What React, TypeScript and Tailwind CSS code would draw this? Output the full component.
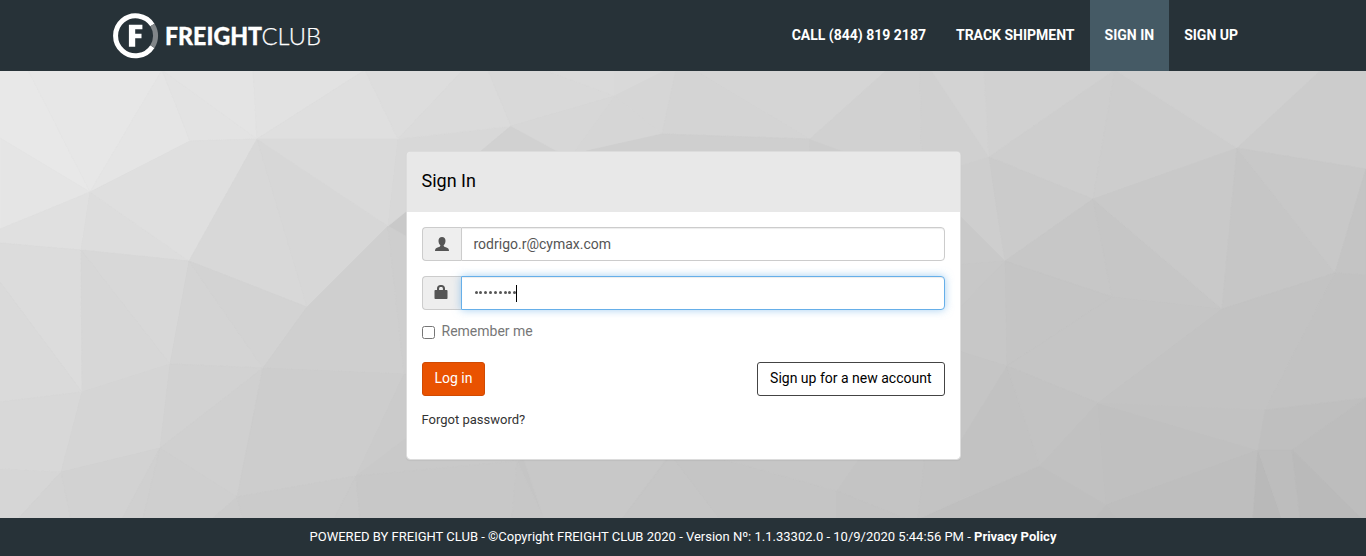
import { useState } from "react";

// Facets of the low-poly backdrop: [fill, points] in page pixels.
const facets: [string, string][] = [
  // left side
  ["#e8e8e8", "0,70 28,70 90,192 0,138"],
  ["#e7e7e7", "28,70 162,70 90,192"],
  ["#e5e5e5", "162,70 190,141 90,192"],
  ["#e3e3e3", "162,70 190,141 257,139"],
  ["#e4e4e4", "162,70 253,70 257,139"],
  ["#e2e2e2", "253,70 365,70 257,139"],
  ["#dfdfdf", "365,70 257,139 398,139"],
  ["#e5e5e5", "0,138 90,192 0,229"],
  ["#e0e0e0", "0,229 90,192 81,250 0,243"],
  ["#dddddd", "90,192 81,250 189,261"],
  ["#dfdfdf", "90,192 190,141 257,139 189,261"],
  ["#d8d8d8", "257,139 189,261 307,307"],
  ["#d7d7d7", "257,139 307,307 388,226"],
  ["#dadada", "257,139 398,139 388,226"],
  ["#d8d8d8", "398,139 388,226 481,151 511,126"],
  ["#dcdcdc", "0,243 81,250 82,392 0,282"],
  ["#dadada", "0,282 82,392 0,402"],
  ["#d8d8d8", "81,250 189,261 170,364"],
  ["#d7d7d7", "81,250 170,364 82,392"],
  ["#d4d4d4", "189,261 170,364 263,368"],
  ["#d3d3d3", "189,261 263,368 307,307"],
  ["#cfcfcf", "307,307 388,226 404,374 263,368"],
  ["#cecece", "388,226 430,250 430,375 404,374"],
  ["#d8d8d8", "0,402 82,392 61,472 0,469"],
  ["#d5d5d5", "82,392 170,364 160,448 61,472"],
  ["#d2d2d2", "170,364 263,368 160,448"],
  ["#d0d0d0", "263,368 160,448 237,497"],
  ["#cdcdcd", "263,368 404,374 356,476 237,497"],
  ["#d6d6d6", "0,469 61,472 18,519 0,519"],
  ["#d3d3d3", "61,472 71,519 18,519"],
  ["#d2d2d2", "61,472 160,448 122,519 71,519"],
  ["#d0d0d0", "160,448 143,519 122,519"],
  ["#cfcfcf", "160,448 237,497 212,519 143,519"],
  ["#cccccc", "237,497 243,519 212,519"],
  ["#cbcbcb", "237,497 356,476 334,519 243,519"],
  ["#cacaca", "356,476 360,519 334,519"],
  ["#cbcbcb", "404,374 430,375 430,425 356,476"],
  ["#c9c9c9", "356,476 430,420 600,440 517,461"],
  // above the card
  ["#dddddd", "365,70 463,70 398,139"],
  ["#dbdbdb", "463,70 488,70 511,126 398,139"],
  ["#d9d9d9", "488,70 544,70 615,96 511,126"],
  ["#dadada", "544,70 615,70 615,96"],
  ["#d9d9d9", "615,70 667,70 615,96"],
  ["#d1d1d1", "511,126 481,151 481,170 575,170 557,151"],
  ["#d7d7d7", "511,126 615,96 572,155 557,151"],
  ["#d6d6d6", "615,96 572,155 586,151 662,134"],
  ["#d6d6d6", "615,96 667,70 676,70 662,134"],
  ["#d4d4d4", "676,70 662,134 810,139 695,70"],
  ["#d5d5d5", "695,70 887,70 810,139"],
  ["#cfcfcf", "586,151 662,134 810,139 808,170 586,170"],
  ["#cdcdcd", "810,139 843,151 843,170 808,170"],
  ["#d1d1d1", "810,139 887,70 920,70 922,170 843,151"],
  ["#d0d0d0", "920,70 931,70 989,157 950,170 922,170"],
  // right side
  ["#d3d3d3", "931,70 984,70 989,157"],
  ["#d1d1d1", "984,70 1115,70 989,157"],
  ["#cecece", "1115,70 989,157 1093,199"],
  ["#cdcdcd", "1115,70 1093,199 1237,148"],
  ["#d0d0d0", "1115,70 1321,70 1237,148"],
  ["#cccccc", "1321,70 1366,70 1366,169 1237,148"],
  ["#cecece", "989,157 940,172 940,196 1005,261"],
  ["#cbcbcb", "989,157 1093,199 1005,261"],
  ["#c9c9c9", "940,196 1005,261 940,266"],
  ["#c7c7c7", "1093,199 1005,261 1112,297"],
  ["#c6c6c6", "1093,199 1112,297 1222,309"],
  ["#c9c9c9", "1093,199 1237,148 1222,309"],
  ["#c6c6c6", "1237,148 1222,309 1335,273"],
  ["#c8c8c8", "1237,148 1366,169 1335,273"],
  ["#c4c4c4", "1366,169 1366,275 1335,273"],
  ["#c8c8c8", "940,266 1005,261 940,328"],
  ["#c7c7c7", "1005,261 940,328 940,345 1007,366"],
  ["#c5c5c5", "1005,261 1112,297 1007,366"],
  ["#c5c5c5", "1112,297 1222,309 1098,403 1007,366"],
  ["#c3c3c3", "1222,309 1335,273 1265,410 1098,403"],
  ["#c2c2c2", "1335,273 1366,275 1366,398 1265,410"],
  ["#c5c5c5", "940,345 1007,366 960,442 940,470"],
  ["#c2c2c2", "1007,366 960,442 940,470 940,508 1040,466"],
  ["#c3c3c3", "1007,366 1098,403 1040,466"],
  ["#c1c1c1", "1098,403 1040,466 1106,505"],
  ["#c0c0c0", "1098,403 1106,505 1258,450"],
  ["#c2c2c2", "1098,403 1265,410 1258,450"],
  ["#bfbfbf", "1265,410 1366,398 1292,450 1258,450"],
  ["#bdbdbd", "1366,398 1292,450 1362,519 1366,519"],
  ["#bebebe", "1106,505 1258,450 1253,519 1117,519"],
  ["#b9b9b9", "1258,450 1253,519 1282,519"],
  ["#bdbdbd", "1258,450 1292,450 1300,519 1282,519"],
  ["#bababa", "1292,450 1362,519 1300,519"],
  ["#bfbfbf", "1040,466 1106,505 1094,519 918,519"],
  ["#bdbdbd", "1106,505 1117,519 1094,519"],
  // below the card
  ["#c8c8c8", "356,476 517,461 512,519 360,519"],
  ["#c7c7c7", "517,461 544,519 512,519"],
  ["#c8c8c8", "517,440 680,440 622,519 544,519"],
  ["#c6c6c6", "671,455 720,519 622,519"],
  ["#c5c5c5", "671,455 708,455 837,491 837,519 720,519"],
  ["#c6c6c6", "708,455 862,455 837,491"],
  ["#c4c4c4", "862,455 837,491 906,519 918,519 925,455"],
  ["#c3c3c3", "837,491 906,519 837,519"],
  ["#c3c3c3", "925,455 960,455 960,500 918,519"],
];

function Backdrop() {
  return (
    <svg
      className="absolute inset-0 h-full w-full"
      viewBox="0 71 1366 447"
      preserveAspectRatio="none"
      aria-hidden="true"
    >
      <rect x="0" y="71" width="481" height="447" fill="#c9c9c9" />
      <rect x="480" y="71" width="886" height="100" fill="#d0d0d0" />
      <rect x="480" y="170" width="886" height="348" fill="#c5c5c5" />
      {facets.map(([fill, points]) => (
        <polygon key={points} points={points} fill={fill} stroke={fill} strokeWidth="0.6" strokeLinejoin="round" />
      ))}
    </svg>
  );
}

function Logo() {
  return (
    <svg width="214" height="48" viewBox="112 12 214 48" role="img" aria-label="Freight Club">
      <path d="M152.4 25A20 20 0 1 0 152.4 46.600" fill="none" stroke="#fff" strokeWidth="5" />
      <path d="M152.4 25A20 20 0 0 1 152.4 46.600" fill="none" stroke="#818689" strokeWidth="5" />
      <path d="M128.900 24.700h13.500v4.500h-7.200v4.600h6.300v4.500h-6.300v8.400h-6.300z" fill="#fff" />
      <text
        x="165"
        y="45"
        fill="#fff"
        stroke="#fff"
        strokeWidth="0.3"
        textLength="97"
        lengthAdjust="spacingAndGlyphs"
        className="font-['Lato'] text-[24px] font-black"
      >
        FREIGHT
      </text>
      <text
        x="261.6"
        y="45"
        fill="#fff"
        stroke="#fff"
        strokeWidth="0.25"
        textLength="59.5"
        lengthAdjust="spacingAndGlyphs"
        className="font-['Lato'] text-[24px] font-light"
      >
        CLUB
      </text>
    </svg>
  );
}

function UserIcon() {
  return (
    <svg className="mb-px" width="14" height="14" viewBox="0 0 14 14" fill="#555">
      <path d="M7 0C4.8 0 3.500 1.400 3.500 3.800c0 1.800.6 3.300 1.600 4.300.4.400.3 1-.2 1.300-.8.500-2.700 1-3.800 1.800C.3 11.800 0 12.700 0 14h14c0-1.300-.3-2.200-1.100-2.800-1.100-.8-3-1.300-3.800-1.800-.5-.3-.6-.9-.2-1.300 1-1 1.600-2.500 1.600-4.300C10.500 1.400 9.200 0 7 0z" />
    </svg>
  );
}

function LockIcon() {
  return (
    <svg className="mr-px mb-[2px]" width="14" height="14" viewBox="0 0 14 14" fill="#555">
      <path
        fillRule="evenodd"
        d="M3 5V3.500C3 1.300 4.500 0 6.400 0h1.200C9.500 0 11 1.300 11 3.500V5h1.700c.5 0 .8.300.8.800v7.400c0 .5-.3.800-.8.800H1.300c-.5 0-.8-.3-.8-.8V5.800c0-.5.3-.8.8-.8zM5.100 5h3.800V3.600C8.900 2.600 8.300 2 7.500 2h-1C5.700 2 5.100 2.600 5.100 3.600z"
      />
    </svg>
  );
}

const links = ["CALL (844) 819 2187", "TRACK SHIPMENT", "SIGN IN", "SIGN UP"];

export default function App() {
  const [remember, setRemember] = useState(false);
  return (
    <div className="flex h-[556px] w-[1366px] flex-col overflow-hidden font-['Roboto',sans-serif] text-sm text-[#555]">
      <header className="flex h-[71px] shrink-0 items-center justify-between bg-[#273238] pr-[113px] pl-28">
        <Logo />
        <nav className="flex h-full">
          {links.map((label) => (
            <a
              key={label}
              href="#"
              className={`flex h-full items-center px-[15px] pb-0.5 font-bold whitespace-nowrap text-white ${label === "SIGN IN" ? "bg-[#455a65]" : ""}`}
            >
              {label}
            </a>
          ))}
        </nav>
      </header>

      <main className="relative flex h-[447px] shrink-0 justify-center pt-20">
        <Backdrop />
        <section className="relative h-[309px] w-[555px] rounded border border-[#dcdcdc] bg-white bg-clip-padding shadow-[0_1px_1px_rgba(0,0,0,0.05)]">
          <h1 className="flex h-[60px] items-center rounded-t-[3px] bg-[#e8e8e8] px-[15px] pb-0.5 text-lg text-black">Sign In</h1>
          <form className="flex flex-col px-[15px] pt-[15px]" onSubmit={(e) => e.preventDefault()}>
            <div className="flex h-[34px]">
              <span className="flex w-[39px] items-center justify-center rounded-l border border-r-0 border-[#ccc] bg-[#eee]">
                <UserIcon />
              </span>
              <div className="flex flex-1 items-center rounded-r border border-[#ccc] bg-white px-3 shadow-[inset_0_1px_1px_rgba(0,0,0,0.075)]">
                rodrigo.r@cymax.com
              </div>
            </div>
            <div className="mt-[15px] flex h-[34px]">
              <span className="flex w-[39px] items-center justify-center rounded-l border border-r-0 border-[#ccc] bg-[#eee]">
                <LockIcon />
              </span>
              <div className="flex flex-1 items-center rounded-r border border-[#66afe9] bg-white px-3 shadow-[inset_0_1px_1px_rgba(0,0,0,0.075),0_0_8px_rgba(102,175,233,0.6)]">
                <span className="mb-px ml-px flex gap-[1.85px]">
                  {Array.from({ length: 9 }, (_, i) => (
                    <i key={i} className="size-[3px] rounded-full bg-[#555]" />
                  ))}
                </span>
                <span className="h-[17px] w-px bg-black" />
              </div>
            </div>
            <label className="mt-[11px] flex h-5 items-center text-[#777]">
              <input
                type="checkbox"
                checked={remember}
                onChange={() => setRemember(!remember)}
                className="mt-[3px] mr-[7px] size-[13px] appearance-none rounded-[2.5px] border border-[#767676] bg-white"
              />
              Remember me
            </label>
            <div className="mt-[21px] flex h-[34px] justify-between">
              <button className="w-[63px] rounded-[3px] border border-[#d04a02] bg-[#e95200] pb-0.5 pl-px text-white">Log in</button>
              <button className="rounded-[3px] border border-[#444] bg-white px-3 pb-0.5 text-black">Sign up for a new account</button>
            </div>
            <a href="#" className="mt-3.5 self-start text-[13px] leading-5 text-[#333]">
              Forgot password?
            </a>
          </form>
        </section>
      </main>

      <footer className="flex h-[38px] shrink-0 items-center justify-center bg-[#273238] text-[13px] whitespace-pre text-white">
        POWERED BY FREIGHT CLUB - ©Copyright FREIGHT CLUB 2020 - Version Nº: 1.1.33302.0 - 10/9/2020 5:44:56 PM -{" "}
        <a href="#" className="font-bold">Privacy Policy</a>
      </footer>
    </div>
  );
}
